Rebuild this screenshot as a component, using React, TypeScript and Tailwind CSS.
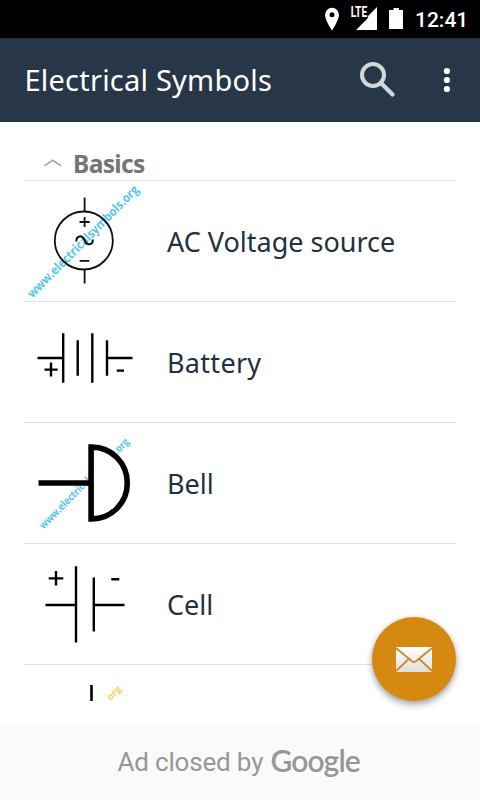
import type { ReactNode } from "react";

interface WatermarkProps {
  x: number;
  y: number;
  length: number;
  size: number;
  color?: string;
  text?: string;
}

function Watermark({ x, y, length, size, color = "#52c5f2", text = "www.electricalsymbols.org" }: WatermarkProps) {
  return (
    <text
      x={x}
      y={y}
      transform={`rotate(-45.3 ${x} ${y})`}
      textLength={length}
      lengthAdjust="spacingAndGlyphs"
      fontSize={size}
      fontWeight={700}
      fill={color}
      className="font-['Open_Sans','Noto_Sans',sans-serif]"
    >
      {text}
    </text>
  );
}

function AcSource() {
  return (
    <svg width="132" height="120" viewBox="24 181 132 120" className="shrink-0">
      <Watermark x={32.5} y={298.5} length={152} size={12.5} />
      <g fill="none" stroke="#111" strokeWidth="1.8">
        <circle cx="83.8" cy="240.5" r="29" />
        <path d="M84.6 197.5V212M84.6 269.5V283.5M79.5 222H89.7M84.6 217V227M79.7 260.8H89.3" />
        <path d="M76.3 241.5C76.3 235.5 81.8 234.5 84.5 240C87 246 92.7 245.5 92.9 239.5" strokeWidth="2" />
      </g>
    </svg>
  );
}

function Battery() {
  return (
    <svg width="132" height="120" viewBox="24 302 132 120" className="shrink-0">
      <path
        d="M37.5 358H63M63.2 333.2V382.7M77.7 340.3V375.7M92.3 333.2V382.7M107 340.3V375.7M107 358H132.5M44.5 369.6H57.7M51 362.5V376.5M116.7 370.6H124"
        stroke="#000"
        strokeWidth="2.4"
      />
    </svg>
  );
}

function Bell() {
  return (
    <svg width="132" height="120" viewBox="24 423 132 120" className="shrink-0">
      <Watermark x={43.5} y={529.5} length={122.5} size={10.5} />
      <path d="M91 447H92C139 448 139 518 92 519H91Z" fill="#fff" />
      <path d="M38.5 483H90" stroke="#000" strokeWidth="5.6" />
      <path d="M91.1 447.1H92A35.3 35.9 0 0 1 92 518.9H91.1Z" fill="none" stroke="#000" strokeWidth="5.6" />
    </svg>
  );
}

function Cell() {
  return (
    <svg width="132" height="120" viewBox="24 544 132 120" className="shrink-0">
      <path
        d="M45.5 605H76M76 566.3V642.5M93.8 577.5V631.5M93.8 605H124.5M48.7 578.4H63.3M56 571V585.5M111.3 579.3H119.3"
        stroke="#000"
        strokeWidth="2.4"
      />
    </svg>
  );
}

function PartialSymbol() {
  return (
    <svg width="132" height="36" viewBox="24 665 132 36" className="shrink-0">
      <Watermark x={108.5} y={703} length={19} size={9.5} color="#fbd25a" text=".org" />
      <path d="M91.5 685V701" stroke="#000" strokeWidth="2.6" />
    </svg>
  );
}

function Row({ symbol, children }: { symbol: ReactNode; children: ReactNode }) {
  return (
    <div className="flex h-[121px] items-center border-b border-[#e2e2e2]">
      {symbol}
      <span className="ml-[11px] whitespace-nowrap pt-[2px] text-[27px] leading-[36px] text-[#223040]">{children}</span>
    </div>
  );
}

function StatusBar() {
  return (
    <div className="flex h-[38px] shrink-0 items-center justify-end bg-black pr-3 text-white">
      <svg width="95" height="38" viewBox="320 0 95 38" fill="#fff">
        <path fillRule="evenodd" d="M332 7.8A7 7 0 0 0 325 15C325 20 332 30.5 332 30.5S339 20 339 15A7 7 0 0 0 332 7.8ZM332 12.3A2.5 2.5 0 1 1 332 17.3A2.5 2.5 0 0 1 332 12.3Z" />
        <path d="M377 7V30H356L367.5 18.5L368.5 15.5Z" />
        <text x="350.7" y="17.3" fontSize="14.5" fontWeight="700" textLength="16.5" lengthAdjust="spacingAndGlyphs" className="font-[Roboto,sans-serif]">LTE</text>
        <path d="M389 10H393.5V8H399V10H403V29H389Z" />
      </svg>
      <span className="w-[53px] whitespace-nowrap pt-[2px] font-[Roboto,sans-serif] text-[21px] font-medium leading-none">12:41</span>
    </div>
  );
}

export default function App() {
  return (
    <div className="flex h-[800px] w-[480px] flex-col overflow-hidden bg-white font-['Noto_Sans',sans-serif]">
      <StatusBar />
      <header className="flex h-[84px] shrink-0 items-center bg-[#283747] text-white shadow-[inset_0_1px_0_#222d39]">
        <h1 className="w-[335px] whitespace-nowrap pl-[24.5px] text-[29px] leading-[40px] tracking-[0.22px]">Electrical Symbols</h1>
        <svg width="145" height="84" viewBox="335 38 145 84" className="shrink-0">
          <g fill="none" stroke="#d4d7da">
            <circle cx="373" cy="75" r="11" strokeWidth="4" />
            <path d="M381 83L392.5 94.5" strokeWidth="4.2" strokeLinecap="round" />
          </g>
          <g fill="#fff">
            <circle cx="446.9" cy="71" r="3.1" />
            <circle cx="446.9" cy="80" r="3.1" />
            <circle cx="446.9" cy="89" r="3.1" />
          </g>
        </svg>
      </header>
      <main className="relative h-[603px] shrink-0">
        <div className="h-[579px] overflow-hidden px-6">
          <div className="flex h-[59px] items-end border-b border-[#e2e2e2] pl-5">
            <svg width="18" height="8" viewBox="0 0 18 8" className="mb-[13px]" fill="none" stroke="#aaa" strokeWidth="1.7">
              <path d="M.5 6.8L8.7 1.3L17 6.8" />
            </svg>
            <span className="ml-[11px] text-[24.5px] font-bold leading-[32px] tracking-[-0.65px] text-[#757575]">Basics</span>
          </div>
          <Row symbol={<AcSource />}>AC Voltage source</Row>
          <Row symbol={<Battery />}><span className="tracking-[0.3px]">Battery</span></Row>
          <Row symbol={<Bell />}>Bell</Row>
          <Row symbol={<Cell />}>Cell</Row>
          <PartialSymbol />
        </div>
        <button className="absolute right-6 bottom-6 flex size-[84px] items-center justify-center rounded-full bg-[#d68910] shadow-[0_4px_7px_rgba(0,0,0,0.32),0_0_5px_rgba(0,0,0,0.12)]">
          <svg width="36" height="25" viewBox="0 0 36 25">
            <defs>
              <linearGradient id="paper" x1="0" y1="0" x2="0" y2="1">
                <stop offset="0" stopColor="#fff" />
                <stop offset="1" stopColor="#dedede" />
              </linearGradient>
            </defs>
            <path d="M0 0H36V25H0Z" fill="url(#paper)" />
            <path d="M0 1L16 14.3Q18 15.8 20 14.3L36 1M0 24L12.7 12M36 24L23.3 12" fill="none" stroke="#d08a25" strokeWidth="1.8" />
          </svg>
        </button>
      </main>
      <footer className="flex h-[75px] items-center bg-[#fafafa] pb-[2px] pl-[117.5px] text-[#979797]">
        <span className="w-[153px] whitespace-nowrap font-[Roboto,sans-serif] text-[26px] leading-[36px] tracking-[-0.18px]">Ad closed by</span>
        <span className="whitespace-nowrap pb-[3px] font-[Lato,sans-serif] text-[30px] font-semibold leading-[36px] tracking-[-0.9px]">Google</span>
      </footer>
    </div>
  );
}
